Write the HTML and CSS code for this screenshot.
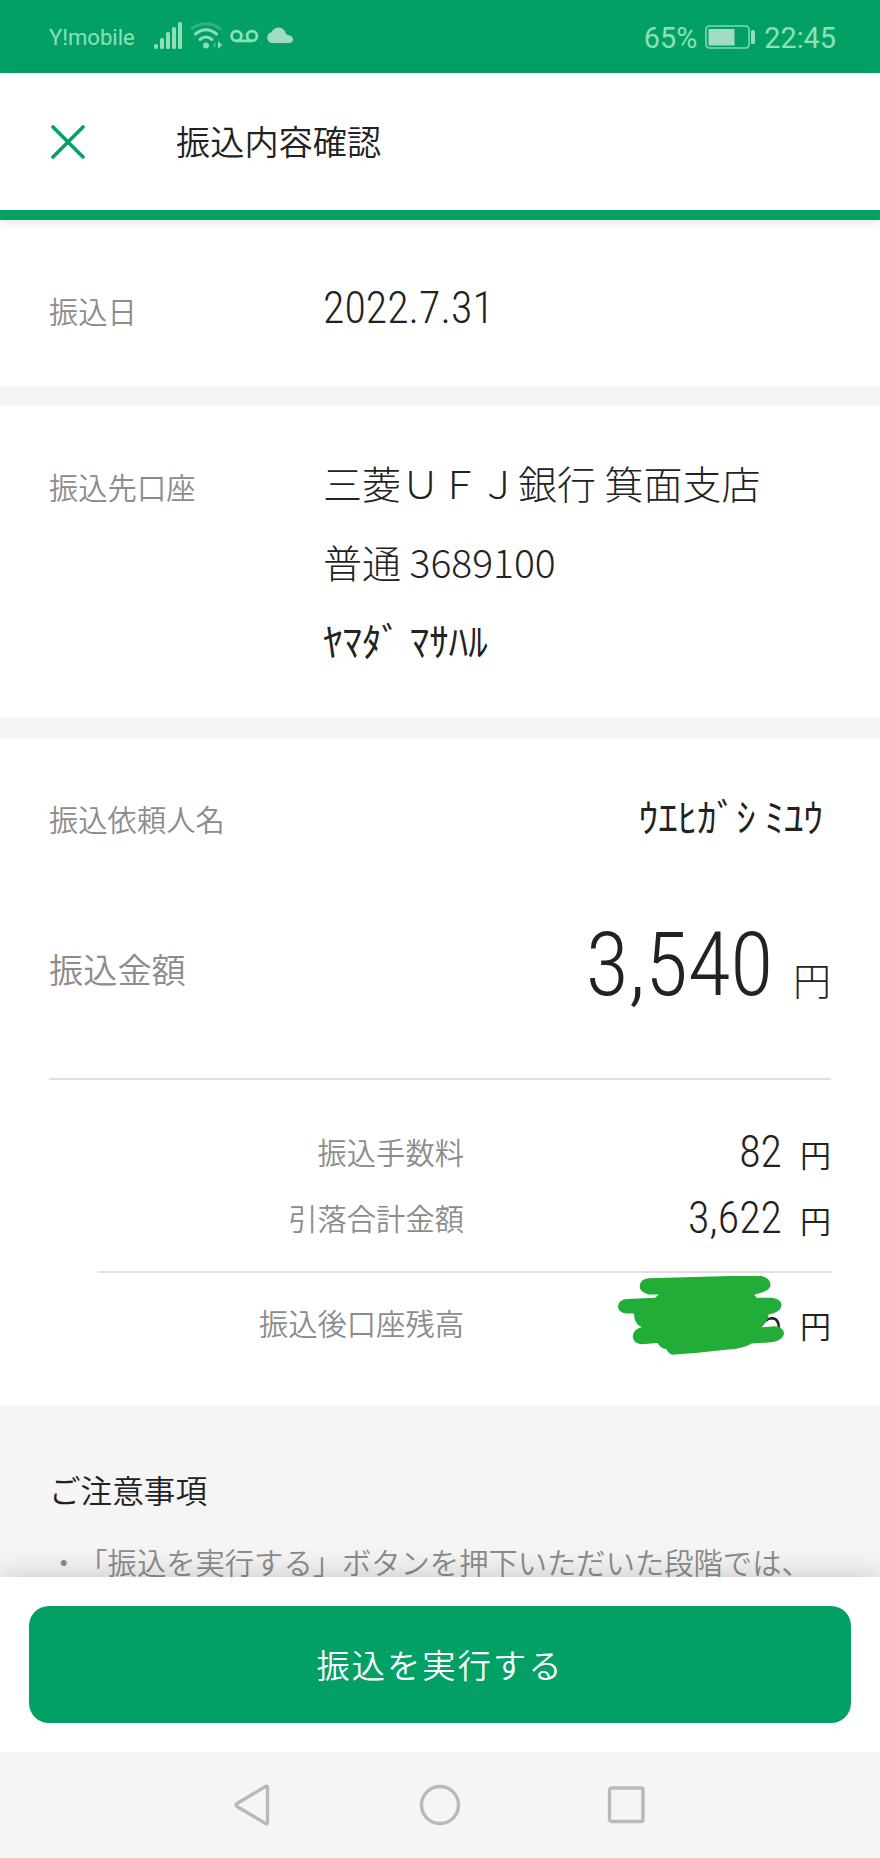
FILE: index.html
```html
<!DOCTYPE html>
<html lang="ja">
<head>
    <meta charset="UTF-8">
    <meta name="viewport" content="width=device-width, initial-scale=1.0">
    <title>振込内容確認</title>
    <link rel="stylesheet" href="styles.css">
</head>
<body>
    <div class="status-bar">
        <span class="carrier">Y!mobile</span>
        <svg class="status-icons" width="142" height="30" viewBox="0 0 142 30">
            <g fill="#8be0ba">
                <rect x="1" y="22" width="4" height="5" rx="2"/>
                <rect x="7" y="16" width="4" height="11" rx="1.5"/>
                <rect x="13" y="10" width="4" height="17" rx="1.5"/>
                <rect x="19" y="5" width="4" height="22" rx="1.5"/>
                <rect x="25" y="0" width="4" height="27" rx="1.5"/>
                <circle cx="53" cy="23.5" r="3"/>
                <path d="M65 19l4 4-4 4z"/>
            </g>
            <path d="M62.500 20l-3 3 3 3z" fill="#3fb98a"/>
            <g fill="none" stroke-linecap="round" stroke-width="3">
                <path d="M39 6.500Q53-3 67 6.500" stroke="#2fb381"/>
                <path d="M42.500 12q10.500-8.500 21 0M47 17.500q6-5 12 0" stroke="#8be0ba"/>
            </g>
            <g fill="none" stroke="#8be0ba" stroke-width="2.800">
                <circle cx="83.500" cy="14" r="4.900"/>
                <circle cx="99" cy="14" r="4.900"/>
                <path d="M83.500 18.900H99"/>
            </g>
            <path d="M119 21a5.500 5.500 0 0 1-.5-10.800C120 7 123 5.500 125.500 5.500c4 0 7 3 7.500 6.500 1 .2 1.500.6 2 1.200 3.500 0 5 2 5 4.300S138.500 21 136 21z" fill="#a0dcc3"/>
        </svg>
        <span class="percent">65%</span>
        <svg class="battery" width="51" height="25" viewBox="0 0 51 25">
            <rect x="1" y="1" width="43" height="22" rx="3.500" fill="none" stroke="#7ddcb0" stroke-width="1.600"/>
            <rect x="3.500" y="4" width="26" height="16.500" fill="#a0dcc3"/>
            <rect x="46" y="5" width="4" height="14" rx="1.500" fill="#8be0ba"/>
        </svg>
        <span class="clock">22:45</span>
    </div>

    <header class="header">
        <svg class="close" width="34" height="34" viewBox="0 0 34 34">
            <path d="M2 2l30 30M32 2L2 32" stroke="#05a066" stroke-width="3.600" stroke-linecap="round"/>
        </svg>
        <h1>振込内容確認</h1>
    </header>

    <main>
        <section class="block date-block">
            <div class="label">振込日</div>
            <div class="value"><span class="num">2022.7.31</span></div>
        </section>

        <section class="block account-block">
            <div class="label">振込先口座</div>
            <div class="value">
                <p>三菱ＵＦＪ銀行 箕面支店</p>
                <p>普通 3689100</p>
                <p class="kana">ﾔﾏﾀﾞ ﾏｻﾊﾙ</p>
            </div>
        </section>

        <section class="block amount-block">
            <div class="row client">
                <div class="label">振込依頼人名</div>
                <div class="kana">ｳｴﾋｶﾞｼ ﾐﾕｳ</div>
            </div>
            <div class="row total">
                <div class="label">振込金額</div>
                <div class="price"><span class="num">3,540</span><span class="yen">円</span></div>
            </div>
            <div class="details">
                <div class="row">
                    <div class="label">振込手数料</div>
                    <div class="price"><span class="num">82</span><span class="yen">円</span></div>
                </div>
                <div class="row">
                    <div class="label">引落合計金額</div>
                    <div class="price"><span class="num">3,622</span><span class="yen">円</span></div>
                </div>
            </div>
            <div class="row balance">
                <div class="label">振込後口座残高</div>
                <div class="price"><span class="num">5</span><span class="yen">円</span></div>
                <!-- 残高を隠す塗りつぶし -->
                <svg class="mask" viewBox="925 650 406 236" preserveAspectRatio="none">
                    <path d="M1000 657L1090 654L1200 650H1275Q1298 655 1298 678Q1297 696 1258 706L1264 715H1302Q1325 719 1325 739Q1322 760 1293 765Q1294 782 1276 803L1308 800Q1331 803 1331 823Q1327 843 1300 848L1251 852Q1240 862 1215 867L1165 873L1120 879L1058 885Q1048 882 1043 868Q1028 866 1022 850L982 854Q961 850 961 830Q963 808 983 803Q965 795 964 762H946Q925 759 925 740Q927 720 948 719L1016 715L1025 705H1000Q978 699 978 680Q980 659 1000 657Z" fill="#22ac38"/>
                </svg>
            </div>
        </section>

        <section class="notice">
            <h2>ご注意事項</h2>
            <p>・「振込を実行する」ボタンを押下いただいた段階では、</p>
        </section>
    </main>

    <footer class="footer">
        <button class="submit" type="button">振込を実行する</button>
    </footer>

    <nav class="nav-bar">
        <svg width="44" height="44" viewBox="0 0 44 44"><path d="M36.500 4.500v35q0 2-2 1L6 23.500q-2-1.500 0-3L34.500 3.500q2-1 2 1z"/></svg>
        <svg width="44" height="44" viewBox="0 0 44 44"><circle cx="22" cy="22" r="18.500"/></svg>
        <svg width="44" height="44" viewBox="0 0 44 44"><rect x="4.500" y="5" width="33.500" height="33.500" rx="2"/></svg>
    </nav>
</body>
</html>
```
FILE: styles.css
```css
* {
    box-sizing: border-box;
    margin: 0;
    padding: 0;
}
body {
    width: 880px;
    height: 1858px;
    overflow: hidden;
    display: flex;
    flex-direction: column;
    font-family: "Noto Sans CJK JP", sans-serif;
    font-weight: 300;
    color: #222;
    background-color: #fff;
}
p, h1, h2 {
    white-space: nowrap;
    font-weight: 300;
}
/* ステータスバー */
.status-bar {
    flex: none;
    height: 73px;
    padding: 2px 44px 0 49px;
    display: flex;
    align-items: center;
    background-color: #03a066;
    color: #8be0ba;
    font-family: Roboto, sans-serif;
    font-weight: 400;
    font-size: 28.8px;
}
.carrier {
    margin-top: -1px;
    font-size: 22.1px;
}
.status-icons {
    margin: -1px 0 0 18px;
}
.percent {
    margin-left: auto;
}
.battery {
    margin: 0 8px 0 8px;
}
/* ヘッダー */
.header {
    flex: none;
    position: relative;
    height: 147px;
    padding-left: 51px;
    display: flex;
    align-items: center;
    border-bottom: 10px solid #05a066;
    box-shadow: 0 2px 10px rgba(0, 0, 0, 0.12);
}
.header h1 {
    margin: -3px 0 0 91px;
    font-size: 34.2px;
    font-weight: 350;
}
/* 本文 */
main {
    flex: none;
    height: 1357px;
    overflow: hidden;
    background-color: #f5f5f5;
}
.block {
    padding: 0 49px;
    background-color: #fff;
}
.label {
    color: #8c8c8c;
    font-size: 29.3px;
    font-weight: 350;
    line-height: 44px;
}
.value {
    font-size: 39px;
}
.num {
    display: inline-block;
    font-family: "Roboto Condensed", Roboto, sans-serif;
    font-stretch: condensed;
    font-size: 44px;
}
.date-block, .account-block {
    display: grid;
    grid-template-columns: 274px 1fr;
    margin-bottom: 20px;
}
.date-block {
    height: 166px;
    padding-top: 68px;
}
.date-block .value {
    margin-top: -10px;
}
.date-block .num {
    line-height: 40px;
}
.account-block {
    height: 312px;
    padding-top: 58px;
}
.account-block p {
    line-height: 78.5px;
}
.account-block .value {
    margin-top: -21px;
}
.kana {
    font-size: 39px;
    font-weight: 400;
}
.row {
    display: flex;
    align-items: center;
    justify-content: space-between;
}
.amount-block {
    height: 668px;
    padding-top: 50px;
}
.client {
    height: 60px;
    padding-right: 8px;
}
.client .kana {
    margin-top: -6px;
}
.total {
    height: 232px;
    border-bottom: 2px solid #e0e0e0;
}
.total .label {
    margin-top: 9px;
    font-size: 34.2px;
}
.total .price {
    margin-top: 4px;
}
.total .num {
    font-size: 88.5px;
    letter-spacing: -0.4px;
}
.total .yen {
    margin-left: 20px;
    font-size: 38px;
}
.price {
    display: flex;
    align-items: baseline;
}
.yen {
    margin-left: 18px;
    font-size: 31px;
    font-weight: 350;
}
.total .yen {
    font-weight: 300;
}
.details {
    height: 193px;
    margin-left: 49px;
    padding-top: 39px;
    border-bottom: 2px solid #e0e0e0;
}
.details .row {
    height: 66px;
}
.details .label, .balance .label {
    width: 366px;
    text-align: right;
}
.details .label {
    margin-top: -2px;
}
.balance {
    position: relative;
    height: 98px;
    margin-left: 49px;
}
.balance .price {
    margin-top: 1px;
}
.mask {
    position: absolute;
    top: 3px;
    right: 47px;
    width: 166px;
    height: 79px;
}
/* ご注意事項 */
.notice {
    padding: 59px 49px 0;
}
.notice h2 {
    font-size: 31.6px;
    line-height: 48px;
    font-weight: 350;
}
.notice p {
    margin-top: 26px;
    font-size: 29.3px;
    font-weight: 350;
    line-height: 44px;
    color: #8c8c8c;
    text-spacing-trim: space-all;
}
/* フッター */
.footer {
    flex: none;
    position: relative;
    height: 175px;
    padding: 29px 29px 0;
    background-color: #fff;
    box-shadow: 0 0 30px rgba(0, 0, 0, 0.2);
}
.submit {
    display: block;
    width: 822px;
    height: 117px;
    padding-bottom: 2px;
    border: none;
    border-radius: 20px;
    background-color: #03a066;
    color: #fff;
    font-family: inherit;
    font-size: 33.3px;
    font-weight: 350;
    letter-spacing: 2px;
}
/* ナビゲーションバー */
.nav-bar {
    position: relative;
    flex: none;
    height: 106px;
    padding: 0 231px;
    display: flex;
    align-items: center;
    justify-content: space-between;
    background-color: #f5f5f5;
}
.nav-bar svg {
    fill: none;
    stroke: #b9b9b9;
    stroke-width: 3.4px;
}
```
